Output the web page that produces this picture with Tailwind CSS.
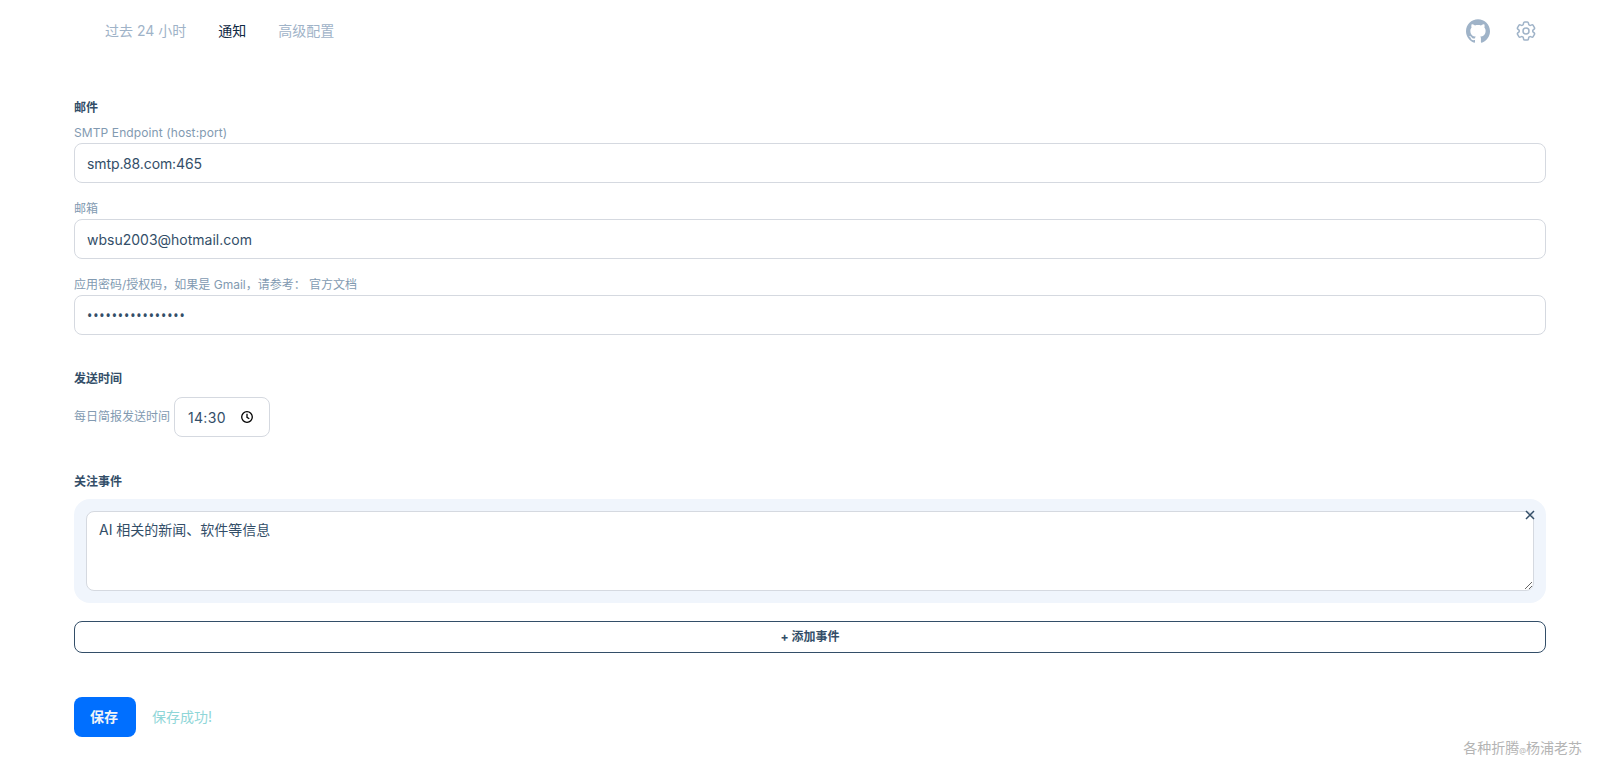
<!DOCTYPE html>
<html lang="zh-CN">
<head>
  <meta charset="UTF-8">
  <title>通知</title>
  <script src="https://cdn.jsdelivr.net/npm/@tailwindcss/browser@4"></script>
</head>
<body class="bg-white h-[775px] overflow-hidden relative font-['Inter','Noto_Sans_CJK_SC',sans-serif] text-[#334e68]">
  <!-- 顶部导航 -->
  <nav class="h-[62px] flex items-center justify-between pl-[105px] pr-[65px]">
    <div class="flex items-center gap-8 text-sm">
      <a class="text-[#9fb3c8]">过去 24 小时</a>
      <a class="text-[#102a43]">通知</a>
      <a class="text-[#9fb3c8]">高级配置</a>
    </div>
    <div class="flex items-center gap-[24px]">
      <svg class="w-6 h-6 text-[#9fb3c8]" viewBox="0 0 24 24" fill="currentColor"><path d="M12 .297c-6.63 0-12 5.373-12 12 0 5.303 3.438 9.8 8.205 11.385.6.113.82-.258.82-.577 0-.285-.01-1.04-.015-2.04-3.338.724-4.042-1.61-4.042-1.61C4.422 18.07 3.633 17.7 3.633 17.7c-1.087-.744.084-.729.084-.729 1.205.084 1.838 1.236 1.838 1.236 1.07 1.835 2.809 1.305 3.495.998.108-.776.417-1.305.76-1.605-2.665-.3-5.466-1.332-5.466-5.93 0-1.31.465-2.38 1.235-3.22-.135-.303-.54-1.523.105-3.176 0 0 1.005-.322 3.3 1.23.96-.267 1.98-.399 3-.405 1.02.006 2.04.138 3 .405 2.28-1.552 3.285-1.23 3.285-1.23.645 1.653.24 2.873.12 3.176.765.84 1.23 1.91 1.23 3.22 0 4.61-2.805 5.625-5.475 5.92.42.36.81 1.096.81 2.22 0 1.606-.015 2.896-.015 3.286 0 .315.21.69.825.57C20.565 22.092 24 17.592 24 12.297c0-6.627-5.373-12-12-12"/></svg>
      <svg class="w-6 h-6 text-[#9fb3c8]" viewBox="0 0 24 24" fill="none" stroke="currentColor" stroke-width="1.5" stroke-linecap="round" stroke-linejoin="round"><path d="M9.594 3.94c.09-.542.56-.94 1.11-.94h2.593c.55 0 1.02.398 1.11.94l.213 1.281c.063.374.313.686.645.87.074.04.147.083.22.127.325.196.72.257 1.075.124l1.217-.456a1.125 1.125 0 0 1 1.37.49l1.296 2.247a1.125 1.125 0 0 1-.26 1.431l-1.003.827c-.293.241-.438.613-.43.992a7.723 7.723 0 0 1 0 .255c-.008.378.137.75.43.991l1.004.827c.424.35.534.955.26 1.43l-1.298 2.247a1.125 1.125 0 0 1-1.369.491l-1.217-.456c-.355-.133-.75-.072-1.076.124a6.47 6.47 0 0 1-.22.128c-.331.183-.581.495-.644.869l-.213 1.281c-.09.543-.56.94-1.11.94h-2.594c-.55 0-1.019-.398-1.11-.94l-.213-1.281c-.062-.374-.312-.686-.644-.87a6.52 6.52 0 0 1-.22-.127c-.325-.196-.72-.257-1.076-.124l-1.217.456a1.125 1.125 0 0 1-1.369-.49l-1.297-2.247a1.125 1.125 0 0 1 .26-1.431l1.004-.827c.292-.24.437-.613.43-.991a6.932 6.932 0 0 1 0-.255c.007-.38-.138-.751-.43-.992l-1.004-.827a1.125 1.125 0 0 1-.26-1.43l1.297-2.247a1.125 1.125 0 0 1 1.37-.491l1.216.456c.356.133.751.072 1.076-.124.072-.044.146-.086.22-.128.332-.183.582-.495.644-.869l.214-1.28Z"/><path d="M15 12a3 3 0 1 1-6 0 3 3 0 0 1 6 0Z"/></svg>
    </div>
  </nav>

  <main class="pl-[74px] pr-[57px] pt-[38px]">
    <!-- 邮件 -->
    <h2 class="text-xs leading-4 font-bold">邮件</h2>
    <label class="block mt-[9px] mb-[2px] text-xs leading-4 tracking-[.1px] text-[#829ab1]">SMTP Endpoint (host:port)</label>
    <input type="text" value="smtp.88.com:465" class="block w-full h-10 px-3 text-sm tracking-[-.1px] border border-[#d5d9e0] rounded-lg bg-white">
    <label class="block mt-[18px] mb-[2px] text-xs leading-4 text-[#829ab1]">邮箱</label>
    <input type="text" value="wbsu2003@hotmail.com" class="block w-full h-10 px-3 text-sm border border-[#d5d9e0] rounded-lg bg-white">
    <label class="block mt-[18px] mb-[2px] text-xs leading-4 text-[#829ab1]">应用密码/授权码，如果是 Gmail，请参考： 官方文档</label>
    <input type="password" value="wbsu2003hotmail1" class="block w-full h-10 px-3 font-['Noto_Sans',sans-serif] text-sm tracking-[.9px] border border-[#d5d9e0] rounded-lg bg-white">

    <!-- 发送时间 -->
    <h2 class="mt-9 text-xs leading-4 font-bold">发送时间</h2>
    <div class="mt-[10px] flex items-center gap-1">
      <label class="text-xs leading-4 text-[#829ab1]">每日简报发送时间</label>
      <div class="relative w-24">
        <input type="text" value="14:30" class="block w-full h-10 pl-[13px] pr-3 text-sm tracking-[.3px] border border-[#d5d9e0] rounded-lg bg-white">
        <svg class="absolute right-4 top-[13px] w-[14px] h-[14px] text-black" viewBox="0 0 14 14" fill="none" stroke="currentColor" stroke-width="1.3"><circle cx="7" cy="7" r="5.3"/><path d="M7 3.8v3.5l2.3 1.4"/></svg>
      </div>
    </div>

    <!-- 关注事件 -->
    <h2 class="mt-[37px] text-xs leading-4 font-bold">关注事件</h2>
    <div class="mt-[9px] relative p-3 rounded-2xl bg-[#f0f5fc]">
      <textarea class="block w-full h-20 px-3 py-2 text-sm leading-5 border border-[#d5d9e0] rounded-lg bg-white">AI 相关的新闻、软件等信息</textarea>
      <svg class="absolute top-[10px] right-[10px] w-3 h-3" viewBox="0 0 12 12" fill="none" stroke="currentColor" stroke-width="1.5"><path d="M2 2l8 8M10 2l-8 8"/></svg>
    </div>
    <button class="block mt-[18px] w-full h-8 text-xs font-bold border border-[#334e68] rounded-lg bg-white">+ 添加事件</button>

    <!-- 保存 -->
    <div class="mt-[44px] flex items-center gap-4">
      <button class="w-[62px] h-10 pr-[2px] text-sm font-bold text-[#f0f4f8] bg-[#006fff] rounded-lg">保存</button>
      <span class="text-sm text-[#8fd6d8]">保存成功!</span>
    </div>
  </main>

  <div class="absolute right-[21px] top-[738px] text-sm leading-5 text-[#b4b4b4]">各种折腾<span class="text-[7px]">@</span>杨浦老苏</div>
</body>
</html>
